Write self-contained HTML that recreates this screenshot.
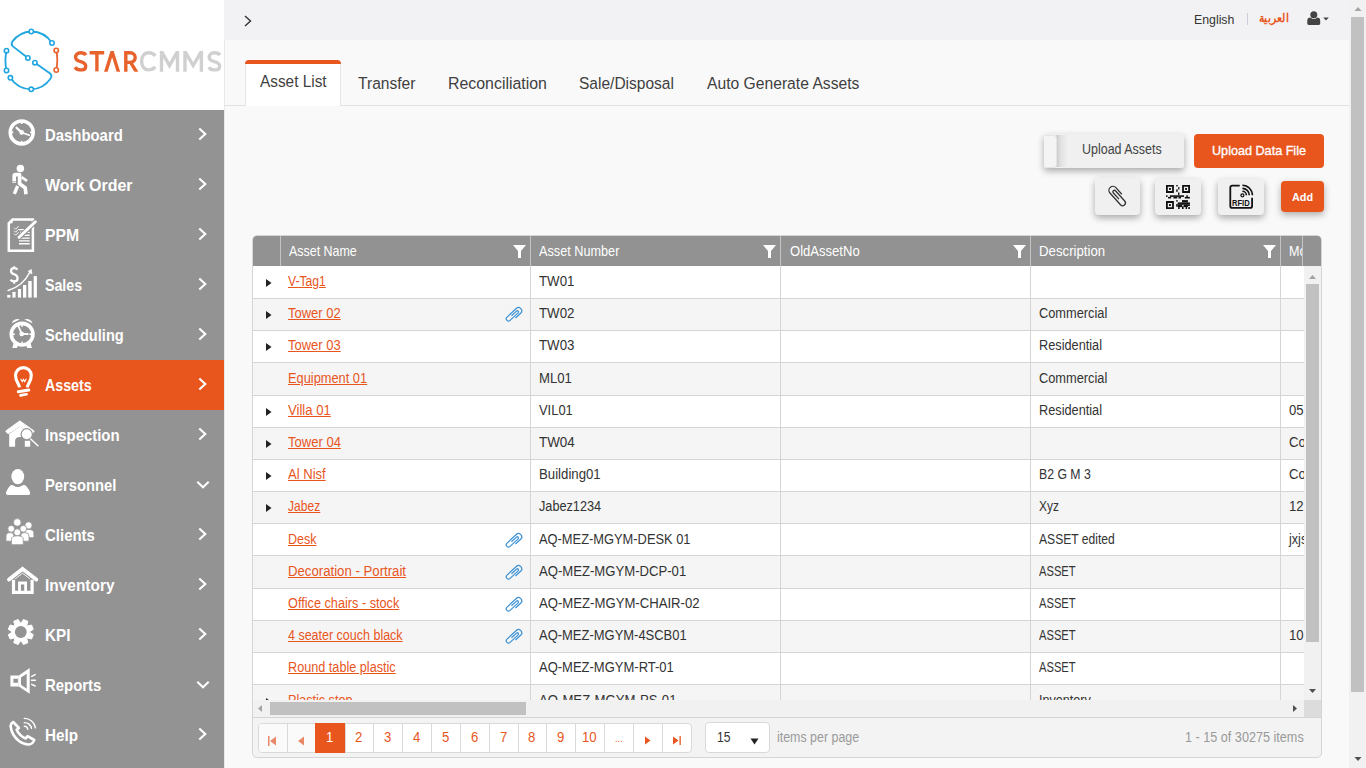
<!DOCTYPE html><html><head><meta charset="utf-8"><style>
*{box-sizing:border-box;margin:0;padding:0}
html,body{width:1366px;height:768px;overflow:hidden;background:#f9f9f9;font-family:"Liberation Sans",sans-serif;color:#333}
div,span,svg{position:absolute}
span{white-space:nowrap;transform-origin:0 0}
</style></head><body><div style="left:0;top:0;width:224px;height:768px;background:#939393"></div>
<div style="left:0;top:0;width:224px;height:110px;background:#fff"><svg style="left:0;top:0" width="224" height="110" viewBox="0 0 224 110">
<g fill="none" stroke="#22a6df" stroke-width="1.8" stroke-linecap="round">
<path d="M52 43 A25 25 0 0 0 31.25 31.5 A25 25 0 0 0 12.3 41.6 Q10.6 44.6 13.2 46.6 L28 58"/>
<path d="M34.9 62.7 L49.8 73.2 Q52.6 75.6 50.6 78.4 A25 25 0 0 1 31.25 89.3 A25 25 0 0 1 10.4 77.8"/>
<path d="M6.5 50.7 Q4.4 60.6 6.5 70.5"/>
</g>
<path d="M56.25 50.4 Q58.4 60.2 56.25 70" fill="none" stroke="#e8622c" stroke-width="1.8"/>
<g fill="#fff" stroke="#22a6df" stroke-width="1.6">
<circle cx="31.25" cy="31.5" r="2.2"/><circle cx="52" cy="43" r="2.2"/><circle cx="6.5" cy="50.7" r="2.2"/><circle cx="6.5" cy="70.5" r="2.2"/>
<circle cx="27.9" cy="58" r="2.2"/><circle cx="34.9" cy="62.7" r="2.2"/><circle cx="10.4" cy="77.8" r="2.2"/><circle cx="31.25" cy="89.3" r="2.2"/>
</g>
<g fill="#fff" stroke="#e8622c" stroke-width="1.6"><circle cx="56.25" cy="50.4" r="2.2"/><circle cx="56.25" cy="70" r="2.2"/></g>
<defs><clipPath id="lc"><rect x="60" y="51" width="170" height="20.8"/></clipPath></defs><g fill="none" stroke-width="3.4" stroke-linejoin="miter" clip-path="url(#lc)">
<g stroke="#e8622c">
<path d="M86 55 C84.8 53.3 82.8 52.7 80.6 52.7 C77.6 52.7 75.6 54.6 75.6 57.2 C75.6 60.1 78.2 61 80.6 61.6 C83.6 62.4 85.7 63.6 85.7 66.2 C85.7 68.6 83.6 70 80.6 70 C78.2 70 76.2 69 75 67.2"/>
<path d="M89.6 52.8 H104.2 M96.9 52.8 V71.6"/>
<path d="M105.6 72.5 L112.1 51.6 L118.6 72.5"/>
<path d="M125.8 72 V52.8 H130 C133.2 52.8 135.2 54.8 135.2 57.6 C135.2 60.4 133.2 62.4 130 62.4 H127.4 M130.6 62.4 L136.8 72.5"/>
</g>
<g stroke="#d0d0d0">
<path d="M155.3 55.8 C153.6 53.8 151.2 52.8 148.6 52.8 C144.2 52.8 141.6 56.4 141.6 61.3 C141.6 66.3 144.2 69.9 148.6 69.9 C151.2 69.9 153.6 68.9 155.3 66.9"/>
<path d="M161.5 72 V51.5 L169.5 65.5 L177.5 51.5 V72"/>
<path d="M185 72 V51.5 L193.2 65.5 L201.4 51.5 V72"/>
<path d="M220 55 C218.8 53.3 216.8 52.7 214.4 52.7 C211.4 52.7 209.2 54.6 209.2 57.2 C209.2 60.1 211.8 61 214.4 61.6 C217.4 62.4 219.6 63.6 219.6 66.2 C219.6 68.6 217.4 70 214.4 70 C212 70 210 69 208.8 67.2"/>
</g></g>
</svg></div>
<svg style="left:0;top:110px" width="45" height="50" viewBox="0 110 45 50"><circle cx="21.7" cy="132.4" r="11.5" fill="none" stroke="#fff" stroke-width="3.5"/><path d="M21.7 121 v3 M21.7 140.8 v3 M10.3 132.4 h3 M30.1 132.4 h3" stroke="#fff" stroke-width="1.6"/><path d="M16.6 127.8 L21.7 132.4" stroke="#fff" stroke-width="2.3" stroke-linecap="round"/><path d="M21.7 132.4 L29.3 135.2" stroke="#fff" stroke-width="1.6" stroke-linecap="round"/><circle cx="21.7" cy="132.4" r="1.7" fill="none" stroke="#fff" stroke-width="1.3"/></svg>
<span style="left:45.20px;top:126px;font-size:17.00px;line-height:19px;color:#fff;font-weight:700;transform:scaleX(0.8762);">Dashboard</span>
<svg style="left:197px;top:127px" width="12" height="14" viewBox="0 0 12 14"><path d="M2.3 1.4 L8.3 7 L2.3 12.6" fill="none" stroke="#fff" stroke-width="2.1"/></svg>
<svg style="left:0;top:160px" width="45" height="50" viewBox="0 160 45 50"><circle cx="20.4" cy="168.6" r="3.75" fill="#fff"/><g fill="none" stroke="#fff" stroke-linejoin="round" stroke-linecap="butt"><path d="M14.2 182.8 V176 Q14.2 174.6 15.6 174.6 H19.6 V183.8 L25.2 187.8 L26 194.3" stroke-width="3.6"/><path d="M17.6 186 L14.3 193.8" stroke-width="3.4"/><path d="M21.6 177.2 L27 180.8" stroke-width="2.6"/></g><path d="M12.3 181.5 h3.8" stroke="#939393" stroke-width="0.6"/></svg>
<span style="left:45.20px;top:176px;font-size:17.00px;line-height:19px;color:#fff;font-weight:700;transform:scaleX(0.9387);">Work Order</span>
<svg style="left:197px;top:177px" width="12" height="14" viewBox="0 0 12 14"><path d="M2.3 1.4 L8.3 7 L2.3 12.6" fill="none" stroke="#fff" stroke-width="2.1"/></svg>
<svg style="left:0;top:210px" width="45" height="50" viewBox="0 210 45 50"><path d="M12.6 219.6 H32.9 V250.8 H8.8 V223.3 Z" fill="none" stroke="#fff" stroke-width="2.5"/><path d="M7.6 223.2 L12.6 218.4 V223.3 Z" fill="#fff"/><path d="M19 229.6 h8 M20 232.4 h9.7 M23 235.3 h6.7 M19 238.1 h10.7 M19 240.9 h10.7 M19 243.8 h10.7" stroke="#fff" stroke-width="1.4"/><path d="M14 227.6 l1.6 1.6 l3 -3 M14 230.6 l1.6 1.6 l3 -3 M14 233.6 l1.6 1.6 l3 -3" fill="none" stroke="#fff" stroke-width="1"/><path d="M19 237.5 L35.6 221.5" stroke="#939393" stroke-width="5"/><path d="M19 237.3 L35.4 221.7" stroke="#fff" stroke-width="2.9" stroke-linecap="round"/></svg>
<span style="left:45.20px;top:226px;font-size:17.00px;line-height:19px;color:#fff;font-weight:700;transform:scaleX(0.9284);">PPM</span>
<svg style="left:197px;top:227px" width="12" height="14" viewBox="0 0 12 14"><path d="M2.3 1.4 L8.3 7 L2.3 12.6" fill="none" stroke="#fff" stroke-width="2.1"/></svg>
<svg style="left:0;top:260px" width="45" height="50" viewBox="0 260 45 50"><g fill="#fff"><rect x="7.2" y="294.9" width="3.2" height="2.7"/><rect x="12.4" y="291.9" width="3.2" height="5.7"/><rect x="17.9" y="289" width="3.2" height="8.6"/><rect x="23" y="285" width="3.3" height="12.6"/><rect x="28.2" y="281" width="3.5" height="16.6"/><rect x="33.7" y="276.1" width="3.2" height="21.5"/></g><path d="M8.2 290.5 Q23 286 30 272" fill="none" stroke="#fff" stroke-width="1.5" stroke-linecap="round"/><path d="M28.3 271.3 L31.3 269.6 L31.9 274 Z" fill="#fff" stroke="#fff" stroke-width="0.8"/><path d="M17.6 269.6 Q16.3 268.2 14.2 268.2 Q11 268.2 11 270.9 Q11 273.2 14.2 274.3 Q17.6 275.4 17.6 278.4 Q17.6 281.3 14.2 281.3 Q11.9 281.3 10.4 279.7" fill="none" stroke="#fff" stroke-width="2.2"/><path d="M14.2 266.2 v2.3 M14.2 281 v2.8" stroke="#fff" stroke-width="2"/></svg>
<span style="left:45.20px;top:276px;font-size:17.00px;line-height:19px;color:#fff;font-weight:700;transform:scaleX(0.8351);">Sales</span>
<svg style="left:197px;top:277px" width="12" height="14" viewBox="0 0 12 14"><path d="M2.3 1.4 L8.3 7 L2.3 12.6" fill="none" stroke="#fff" stroke-width="2.1"/></svg>
<svg style="left:0;top:310px" width="45" height="50" viewBox="0 310 45 50"><circle cx="22.1" cy="334.2" r="10.8" fill="none" stroke="#fff" stroke-width="3.6"/><path d="M11.8 323.3 A5.5 5 -25 0 1 19.9 319.6 Z M32.5 323.3 A5.5 5 25 0 0 24.3 319.6 Z" fill="#fff"/><path d="M13.8 342.5 L12.3 348 H17 L18.2 344.5 Z M30.4 342.5 L31.9 348 H27.2 L26 344.5 Z" fill="#fff"/><path d="M22.1 324.8 v2.2 M22.1 341.4 v2.2 M12.7 334.2 h2.2 M29.3 334.2 h2.2" stroke="#fff" stroke-width="1.4"/><path d="M18.3 325.8 L21.7 333.9" stroke="#fff" stroke-width="1.7" stroke-linecap="round"/><path d="M21.7 333.9 H27.7" stroke="#fff" stroke-width="2" stroke-linecap="round"/><circle cx="21.7" cy="333.9" r="1.7" fill="none" stroke="#fff" stroke-width="1.3"/></svg>
<span style="left:45.20px;top:326px;font-size:17.00px;line-height:19px;color:#fff;font-weight:700;transform:scaleX(0.8596);">Scheduling</span>
<svg style="left:197px;top:327px" width="12" height="14" viewBox="0 0 12 14"><path d="M2.3 1.4 L8.3 7 L2.3 12.6" fill="none" stroke="#fff" stroke-width="2.1"/></svg>
<div style="left:0;top:360px;width:224px;height:50px;background:#e8561e"></div>
<svg style="left:0;top:360px" width="45" height="50" viewBox="0 360 45 50"><path d="M19.5 387.3 C19.3 383.8 15.5 381.5 15.5 375.5 A7.9 7.9 0 0 1 31.3 375.5 C31.3 381.5 27.5 383.8 27.3 387.3" fill="none" stroke="#fff" stroke-width="3.1"/><path d="M18.3 391.7 L28.8 389.9" stroke="#fff" stroke-width="3" stroke-linecap="round"/><path d="M20.5 395.4 L26.6 394.3" stroke="#fff" stroke-width="2.6" stroke-linecap="round"/><path d="M20.7 378.7 l1.6 3 l1.2 -2.2 l1.2 2.2 l1.6 -3" fill="none" stroke="#fff" stroke-width="1.1"/></svg>
<span style="left:45.20px;top:376px;font-size:17.00px;line-height:19px;color:#fff;font-weight:700;transform:scaleX(0.8376);">Assets</span>
<svg style="left:197px;top:377px" width="12" height="14" viewBox="0 0 12 14"><path d="M2.3 1.4 L8.3 7 L2.3 12.6" fill="none" stroke="#fff" stroke-width="2.1"/></svg>
<svg style="left:0;top:410px" width="45" height="50" viewBox="0 410 45 50"><path d="M5.7 431.1 L19.8 420.9 L34.2 431.1 L32 433.8 L19.8 426 L8 433.8 Z" fill="#fff" stroke="#fff" stroke-width="1" stroke-linejoin="round"/><path d="M9.2 434 L19.8 426.5 L23.5 429 L21 437 A5 5 0 0 0 19 437 Q15.1 437.5 15.1 441 V446.7 H9.2 Z" fill="#fff"/><rect x="24.8" y="440.7" width="5.4" height="6" fill="#fff"/><circle cx="26.75" cy="434.3" r="6.2" fill="#939393"/><circle cx="26.75" cy="434.3" r="5" fill="#fff"/><path d="M30.7 439 L37.9 445.7" stroke="#fff" stroke-width="1.5" stroke-linecap="round"/></svg>
<span style="left:45.20px;top:426px;font-size:17.00px;line-height:19px;color:#fff;font-weight:700;transform:scaleX(0.8775);">Inspection</span>
<svg style="left:197px;top:427px" width="12" height="14" viewBox="0 0 12 14"><path d="M2.3 1.4 L8.3 7 L2.3 12.6" fill="none" stroke="#fff" stroke-width="2.1"/></svg>
<svg style="left:0;top:460px" width="45" height="50" viewBox="0 460 45 50"><ellipse cx="17.8" cy="476.6" rx="6.4" ry="7.6" fill="#fff"/><path d="M6 492.6 Q8.5 486.5 11 485 Q12.5 484.6 13.5 485.6 Q17.8 488.6 22.1 485.6 Q23.1 484.6 24.6 485 Q27.7 486.5 30.2 492.6 Q30.6 494.9 28.6 494.9 H7.6 Q5.6 494.9 6 492.6 Z" fill="#fff"/></svg>
<span style="left:45.20px;top:476px;font-size:17.00px;line-height:19px;color:#fff;font-weight:700;transform:scaleX(0.8687);">Personnel</span>
<svg style="left:196px;top:480px" width="14" height="10" viewBox="0 0 14 10"><path d="M1.3 1.8 L7 7.3 L12.7 1.8" fill="none" stroke="#fff" stroke-width="2"/></svg>
<svg style="left:0;top:510px" width="45" height="50" viewBox="0 510 45 50"><g fill="#fff" stroke="#939393" stroke-width="0.8"><circle cx="28.5" cy="525.4" r="3.6"/><path d="M23.8 537.7 V533 Q23.8 529.4 28.5 529.4 Q33.9 529.4 33.9 533 V537.7 Z"/><circle cx="17.3" cy="522.4" r="3.8"/><circle cx="11.2" cy="528.8" r="3.4"/><path d="M6 541.2 V536 Q6 532.6 10.5 532.6 Q14 532.6 14 536 V541.2 Z"/><circle cx="23.3" cy="528.8" r="3.4"/><path d="M20.8 541.2 V536 Q20.8 532.6 25 532.6 Q29 532.6 29 536 V541.2 Z"/><circle cx="17.3" cy="532.3" r="3.5"/><path d="M11.4 544.7 V539.4 Q11.4 535.8 17.3 535.8 Q23.3 535.8 23.3 539.4 V544.7 Z"/></g></svg>
<span style="left:45.20px;top:526px;font-size:17.00px;line-height:19px;color:#fff;font-weight:700;transform:scaleX(0.8804);">Clients</span>
<svg style="left:197px;top:527px" width="12" height="14" viewBox="0 0 12 14"><path d="M2.3 1.4 L8.3 7 L2.3 12.6" fill="none" stroke="#fff" stroke-width="2.1"/></svg>
<svg style="left:0;top:560px" width="45" height="50" viewBox="0 560 45 50"><path d="M9 579.6 L22.55 569 L36.3 579.6" fill="none" stroke="#fff" stroke-width="3.8" stroke-linejoin="miter" stroke-linecap="round"/><path d="M15.2 578.8 L22.55 573.2 L29.9 578.8" fill="none" stroke="#fff" stroke-width="0.9"/><path d="M13.5 579.8 V592.3 H32.1 V579.8" fill="none" stroke="#fff" stroke-width="3.2"/><path d="M19.5 591 V583 H25.6 V591" fill="none" stroke="#fff" stroke-width="2.8"/></svg>
<span style="left:45.20px;top:576px;font-size:17.00px;line-height:19px;color:#fff;font-weight:700;transform:scaleX(0.9083);">Inventory</span>
<svg style="left:197px;top:577px" width="12" height="14" viewBox="0 0 12 14"><path d="M2.3 1.4 L8.3 7 L2.3 12.6" fill="none" stroke="#fff" stroke-width="2.1"/></svg>
<svg style="left:0;top:610px" width="45" height="50" viewBox="0 610 45 50"><path d="M21.25 623.01 L23.43 619.47 L27.80 621.28 L26.84 625.33 L27.47 625.96 L31.52 625.00 L33.33 629.37 L29.79 631.55 L29.79 632.45 L33.33 634.63 L31.52 639.00 L27.47 638.04 L26.84 638.67 L27.80 642.72 L23.43 644.53 L21.25 640.99 L20.35 640.99 L18.17 644.53 L13.80 642.72 L14.76 638.67 L14.13 638.04 L10.08 639.00 L8.27 634.63 L11.81 632.45 L11.81 631.55 L8.27 629.37 L10.08 625.00 L14.13 625.96 L14.76 625.33 L13.80 621.28 L18.17 619.47 L20.35 623.01 Z" fill="#fff" stroke="#fff" stroke-width="1" stroke-linejoin="round"/><circle cx="20.8" cy="632" r="5.9" fill="#939393"/></svg>
<span style="left:45.20px;top:626px;font-size:17.00px;line-height:19px;color:#fff;font-weight:700;transform:scaleX(0.8963);">KPI</span>
<svg style="left:197px;top:627px" width="12" height="14" viewBox="0 0 12 14"><path d="M2.3 1.4 L8.3 7 L2.3 12.6" fill="none" stroke="#fff" stroke-width="2.1"/></svg>
<svg style="left:0;top:660px" width="45" height="50" viewBox="0 660 45 50"><path d="M10.4 675.6 H18.8 V686.5 H10.4 Z M13.4 678.8 V682.8 H17.9 V678.8 Z" fill="#fff" fill-rule="evenodd"/><path d="M18.8 675.6 L29.7 667.9 V693.7 L18.8 686.5 Z M21 677.4 V684.8 L26.7 688.7 V673.8 Z" fill="#fff" fill-rule="evenodd"/><path d="M31.7 676.3 L35.2 674.6 M31.5 680.3 H35.4 M31.7 684.3 L35.2 686" stroke="#fff" stroke-width="1.5" stroke-linecap="round"/></svg>
<span style="left:45.20px;top:676px;font-size:17.00px;line-height:19px;color:#fff;font-weight:700;transform:scaleX(0.8780);">Reports</span>
<svg style="left:196px;top:680px" width="14" height="10" viewBox="0 0 14 10"><path d="M1.3 1.8 L7 7.3 L12.7 1.8" fill="none" stroke="#fff" stroke-width="2"/></svg>
<svg style="left:0;top:710px" width="45" height="50" viewBox="0 710 45 50"><path d="M13.2 722 Q11 723 10.6 726 Q11.5 735 19 741 Q24.5 745 29 744.5 Q33 744 34.2 740 L27.6 736.2 L25.7 738.5 Q19.5 736 16.6 729.8 L18.9 728 Z" fill="none" stroke="#fff" stroke-width="2.6" stroke-linejoin="round"/><path d="M24.3 726.3 A3.4 3.4 0 0 1 27.75 729.3 M24.3 722.6 A7 7 0 0 1 31.5 728.3 M24.3 718.4 A11 11 0 0 1 35.4 727.8" fill="none" stroke="#fff" stroke-width="1.4" stroke-linecap="round"/></svg>
<span style="left:45.20px;top:726px;font-size:17.00px;line-height:19px;color:#fff;font-weight:700;transform:scaleX(0.8985);">Help</span>
<svg style="left:197px;top:727px" width="12" height="14" viewBox="0 0 12 14"><path d="M2.3 1.4 L8.3 7 L2.3 12.6" fill="none" stroke="#fff" stroke-width="2.1"/></svg>
<div style="left:224px;top:0;width:1125px;height:40px;background:#f2f2f4"></div>
<div style="left:224px;top:40px;width:1px;height:728px;background:#e8e8e8"></div>
<svg style="left:243px;top:15px" width="10" height="12" viewBox="0 0 10 12"><path d="M2 1 L7.5 6 L2 11" fill="none" stroke="#333" stroke-width="1.4"/></svg>
<span style="left:1194.40px;top:12px;font-size:13.70px;line-height:15px;color:#333;font-weight:400;transform:scaleX(0.8991);">English</span>
<div style="left:1247px;top:13px;width:1px;height:12px;background:#ccd"></div>
<span style="left:1258.5px;top:10px;font-size:11.5px;font-weight:bold;color:#e8561e;line-height:16px;transform:scaleX(0.9)">العربية</span>
<svg style="left:1306px;top:10px" width="24" height="16" viewBox="0 0 24 16"><path d="M1.3 10.8 Q1.3 7.6 4.5 7.6 H11 Q14.2 7.6 14.2 10.8 V13.6 Q14.2 15 12.8 15 H2.7 Q1.3 15 1.3 13.6 Z" fill="#444"/><circle cx="7.8" cy="4.8" r="4.3" fill="#f2f2f4"/><circle cx="7.8" cy="4.8" r="3.5" fill="#444"/><path d="M17.2 7.6 h5.6 l-2.8 2.8z" fill="#444"/></svg>
<div style="left:1349px;top:0;width:17px;height:768px;background:#f1f1f1"></div>
<div style="left:1351px;top:17px;width:13px;height:675px;background:#c1c1c1"></div>
<svg style="left:1350px;top:0" width="16" height="768" viewBox="0 0 16 768"><path d="M4.5 11 L8 7 L11.5 11 Z" fill="#a3a3a3"/><path d="M4.5 757 L11.5 757 L8 761 Z" fill="#505050"/></svg>
<div style="left:225px;top:105px;width:1124px;height:1px;background:#dfe3e8"></div>
<div style="left:245px;top:60px;width:96px;height:46px;background:#fff;border-left:1px solid #e3e6ea;border-right:1px solid #e3e6ea;border-radius:4px 4px 0 0"></div>
<div style="left:245px;top:60px;width:96px;height:4px;background:#e8561e;border-radius:4px 4px 0 0"></div>
<span style="left:260.30px;top:72px;font-size:16.80px;line-height:19px;color:#3f3f3f;font-weight:400;transform:scaleX(0.9159);">Asset List</span>
<span style="left:357.70px;top:73px;font-size:17.20px;line-height:20px;color:#3f3f3f;font-weight:400;transform:scaleX(0.9069);">Transfer</span>
<span style="left:448.20px;top:73px;font-size:17.20px;line-height:20px;color:#3f3f3f;font-weight:400;transform:scaleX(0.9245);">Reconciliation</span>
<span style="left:579.30px;top:73px;font-size:17.20px;line-height:20px;color:#3f3f3f;font-weight:400;transform:scaleX(0.9033);">Sale/Disposal</span>
<span style="left:706.50px;top:73px;font-size:17.20px;line-height:20px;color:#3f3f3f;font-weight:400;transform:scaleX(0.9114);">Auto Generate Assets</span>
<div style="left:1044px;top:134px;width:140px;height:34px;background:#f0f0f0;border-radius:2px;box-shadow:0 3px 7px rgba(0,0,0,.32)"></div>
<div style="left:1056px;top:135px;width:12px;height:32px;background:linear-gradient(90deg,rgba(0,0,0,.17),rgba(0,0,0,.06) 40%,rgba(0,0,0,0))"></div>
<div style="left:1044px;top:134.5px;width:12.5px;height:33px;background:#f4f4f4;border:1px solid #e4e4e4;border-left:none;border-radius:2px 4px 4px 2px"></div>
<span style="left:1081.60px;top:141px;font-size:14.00px;line-height:16px;color:#444;font-weight:400;transform:scaleX(0.8905);">Upload Assets</span>
<div style="left:1194px;top:134px;width:130px;height:34px;background:#e8561e;border-radius:4px"></div>
<span style="left:1212.00px;top:143px;font-size:13.50px;line-height:15px;color:#fff;font-weight:400;transform:scaleX(0.9348);-webkit-text-stroke:0.35px #fff">Upload Data File</span>
<div style="left:1095px;top:178px;width:45px;height:37px;background:#f0f0f0;border-radius:4px;box-shadow:0 3px 7px rgba(0,0,0,.32)"></div>
<div style="left:1155px;top:179px;width:46px;height:36px;background:#f0f0f0;border-radius:4px;box-shadow:0 3px 7px rgba(0,0,0,.32)"></div>
<div style="left:1218px;top:179px;width:46px;height:36px;background:#f0f0f0;border-radius:4px;box-shadow:0 3px 7px rgba(0,0,0,.32)"></div>
<div style="left:1281px;top:181px;width:43px;height:31px;background:#e8561e;border-radius:4px;box-shadow:0 3px 7px rgba(0,0,0,.3)"></div>
<span style="left:1292.00px;top:191px;font-size:11.00px;line-height:12px;color:#fff;font-weight:700;transform:scaleX(0.9821);">Add</span>
<svg style="left:1104.6px;top:182.8px" width="26" height="26" viewBox="-13 -13 26 26"><g transform="rotate(-42)" fill="none" stroke="#333" stroke-width="1.3"><path d="M4 1.2 V-7.6 A4 4 0 0 0 -4 -7.6 V8.2 A2.8 2.8 0 0 0 1.6 8.2 V-5.6 A1.5 1.5 0 0 0 -1.4 -5.6 V3"/></g></svg>
<svg style="left:1166px;top:185px" width="24" height="24" viewBox="0 0 24 24"><g fill="#111"><path d="M0.0 0.0h7.9v7.9h-7.9z M1.8 1.8v4.3h4.3v-4.3z" fill-rule="evenodd"/><rect x="3.0" y="3.0" width="1.9" height="1.9"/><path d="M16.1 0.0h7.9v7.9h-7.9z M17.9 1.8v4.3h4.3v-4.3z" fill-rule="evenodd"/><rect x="19.1" y="3.0" width="1.9" height="1.9"/><path d="M0.0 16.1h7.9v7.9h-7.9z M1.8 17.9v4.3h4.3v-4.3z" fill-rule="evenodd"/><rect x="3.0" y="19.1" width="1.9" height="1.9"/><rect x="10.2" y="0.0" width="1.5" height="1.4"/><rect x="12.2" y="2.0" width="1.2" height="2.5"/><rect x="10.2" y="4.4" width="1.5" height="2.4"/><rect x="12.1" y="7.4" width="1.3" height="3.0"/><rect x="0.0" y="10.3" width="1.6" height="1.6"/><rect x="3.9" y="10.3" width="14.1" height="1.6"/><rect x="2.0" y="11.9" width="3.2" height="1.6"/><rect x="7.4" y="11.9" width="3.9" height="1.6"/><rect x="12.5" y="11.9" width="2.5" height="1.6"/><rect x="18.8" y="11.9" width="5.1" height="1.6"/><rect x="20.3" y="10.3" width="1.6" height="1.6"/><rect x="10.2" y="15.1" width="1.5" height="1.5"/><rect x="16.0" y="15.1" width="5.9" height="2.3"/><rect x="11.7" y="17.4" width="12.2" height="2.4"/><rect x="10.2" y="19.0" width="1.5" height="2.7"/><rect x="11.7" y="19.8" width="4.5" height="2.3"/><rect x="17.6" y="19.8" width="4.3" height="2.3"/><rect x="21.9" y="19.8" width="2.0" height="1.2"/><rect x="12.1" y="22.1" width="1.6" height="1.9"/><rect x="16.0" y="21.4" width="1.6" height="2.6"/><rect x="19.6" y="22.1" width="1.5" height="1.9"/><rect x="22.3" y="22.1" width="1.6" height="1.9"/></g></svg>
<svg style="left:1222px;top:180px" width="38" height="34" viewBox="1222 180 38 34"><path d="M1239.7 185.6 H1232.3 Q1230.3 185.6 1230.3 187.6 V205.9 Q1230.3 207.9 1232.3 207.9 H1250.1 Q1252.1 207.9 1252.1 205.9 V197.7" fill="none" stroke="#111" stroke-width="1.8"/><path d="M1242.4 185.3 A10 10 0 0 1 1252.4 195.3 M1242.4 188.4 A6.9 6.9 0 0 1 1249.3 195.3 M1242.4 191.3 A4 4 0 0 1 1246.4 195.3" fill="none" stroke="#111" stroke-width="1.6"/><circle cx="1242.4" cy="195.3" r="1.5" fill="none" stroke="#111" stroke-width="1.3"/></svg>
<span style="left:1232.20px;top:198px;font-size:9.00px;line-height:10px;color:#111;font-weight:700;transform:scaleX(0.8429);">RFID</span>
<div style="left:252px;top:235px;width:1070px;height:523px;border:1px solid #d5d5d5;border-radius:5px;background:#f3f3f3;overflow:hidden"><div style="left:0;top:0;width:1068px;height:30px;background:#929292"></div></div>
<div style="left:280px;top:236px;width:1px;height:30px;background:#c4c4c4"></div>
<div style="left:530px;top:236px;width:1px;height:30px;background:#c4c4c4"></div>
<div style="left:780px;top:236px;width:1px;height:30px;background:#c4c4c4"></div>
<div style="left:1030px;top:236px;width:1px;height:30px;background:#c4c4c4"></div>
<div style="left:1280px;top:236px;width:1px;height:30px;background:#c4c4c4"></div>
<div style="left:1302px;top:236px;width:1px;height:30px;background:#c4c4c4"></div>
<span style="left:289.20px;top:243px;font-size:14.10px;line-height:16px;color:#fff;font-weight:400;transform:scaleX(0.8829);">Asset Name</span>
<span style="left:539.20px;top:243px;font-size:14.10px;line-height:16px;color:#fff;font-weight:400;transform:scaleX(0.9000);">Asset Number</span>
<span style="left:789.50px;top:243px;font-size:14.10px;line-height:16px;color:#fff;font-weight:400;transform:scaleX(0.9265);">OldAssetNo</span>
<span style="left:1039.30px;top:243px;font-size:14.10px;line-height:16px;color:#fff;font-weight:400;transform:scaleX(0.9386);">Description</span>
<div style="left:1281px;top:236px;width:21px;height:30px;overflow:hidden"><span style="left:8.00px;top:7px;font-size:14.10px;line-height:16px;color:#fff;font-weight:400;transform:scaleX(0.8900);">Mo</span></div>
<svg style="left:513px;top:245px" width="14" height="14" viewBox="0 0 14 14"><path d="M0 0 H13 L8 6 V13 H5 V6 Z" fill="#fff"/></svg>
<svg style="left:763px;top:245px" width="14" height="14" viewBox="0 0 14 14"><path d="M0 0 H13 L8 6 V13 H5 V6 Z" fill="#fff"/></svg>
<svg style="left:1013px;top:245px" width="14" height="14" viewBox="0 0 14 14"><path d="M0 0 H13 L8 6 V13 H5 V6 Z" fill="#fff"/></svg>
<svg style="left:1263px;top:245px" width="14" height="14" viewBox="0 0 14 14"><path d="M0 0 H13 L8 6 V13 H5 V6 Z" fill="#fff"/></svg>
<div style="left:253px;top:266px;width:1051px;height:434px;overflow:hidden;background:#fff"><div style="left:0;top:0px;width:1051px;height:33px;background:#fff;border-bottom:1px solid #d5d5d5"></div><svg style="left:12px;top:11.50px" width="8" height="10" viewBox="0 0 8 10"><path d="M1 1 L6.5 5 L1 9 Z" fill="#222"/></svg><span style="left:35.00px;top:7px;font-size:14.00px;line-height:16px;color:#e8561e;font-weight:400;transform:scaleX(0.8650);text-decoration:underline">V-Tag1</span><span style="left:286.00px;top:7px;font-size:14.00px;line-height:16px;color:#333;font-weight:400;transform:scaleX(0.9481);">TW01</span><div style="left:0;top:33px;width:1051px;height:32px;background:#f5f5f5;border-bottom:1px solid #d5d5d5"></div><svg style="left:12px;top:43.50px" width="8" height="10" viewBox="0 0 8 10"><path d="M1 1 L6.5 5 L1 9 Z" fill="#222"/></svg><span style="left:35.00px;top:39px;font-size:14.00px;line-height:16px;color:#e8561e;font-weight:400;transform:scaleX(0.9277);text-decoration:underline">Tower 02</span><svg style="left:251px;top:38.80px" width="20" height="20" viewBox="-10 -10 20 20"><g transform="rotate(47) scale(0.8)" fill="none" stroke="#3d93d6" stroke-width="1.55"><path d="M4 1.2 V-7.6 A4 4 0 0 0 -4 -7.6 V8.2 A2.8 2.8 0 0 0 1.6 8.2 V-5.6 A1.5 1.5 0 0 0 -1.4 -5.6 V3"/></g></svg><span style="left:286.00px;top:39px;font-size:14.00px;line-height:16px;color:#333;font-weight:400;transform:scaleX(0.9481);">TW02</span><span style="left:786.40px;top:39px;font-size:14.00px;line-height:16px;color:#333;font-weight:400;transform:scaleX(0.9146);">Commercial</span><div style="left:0;top:65px;width:1051px;height:32px;background:#fff;border-bottom:1px solid #d5d5d5"></div><svg style="left:12px;top:75.50px" width="8" height="10" viewBox="0 0 8 10"><path d="M1 1 L6.5 5 L1 9 Z" fill="#222"/></svg><span style="left:35.00px;top:71px;font-size:14.00px;line-height:16px;color:#e8561e;font-weight:400;transform:scaleX(0.9277);text-decoration:underline">Tower 03</span><span style="left:286.00px;top:71px;font-size:14.00px;line-height:16px;color:#333;font-weight:400;transform:scaleX(0.9481);">TW03</span><span style="left:786.40px;top:71px;font-size:14.00px;line-height:16px;color:#333;font-weight:400;transform:scaleX(0.9096);">Residential</span><div style="left:0;top:97px;width:1051px;height:33px;background:#f5f5f5;border-bottom:1px solid #d5d5d5"></div><span style="left:35.00px;top:104px;font-size:14.00px;line-height:16px;color:#e8561e;font-weight:400;transform:scaleX(0.9156);text-decoration:underline">Equipment 01</span><span style="left:286.00px;top:104px;font-size:14.00px;line-height:16px;color:#333;font-weight:400;transform:scaleX(0.9394);">ML01</span><span style="left:786.40px;top:104px;font-size:14.00px;line-height:16px;color:#333;font-weight:400;transform:scaleX(0.9146);">Commercial</span><div style="left:0;top:130px;width:1051px;height:32px;background:#fff;border-bottom:1px solid #d5d5d5"></div><svg style="left:12px;top:140.50px" width="8" height="10" viewBox="0 0 8 10"><path d="M1 1 L6.5 5 L1 9 Z" fill="#222"/></svg><span style="left:35.00px;top:136px;font-size:14.00px;line-height:16px;color:#e8561e;font-weight:400;transform:scaleX(0.9373);text-decoration:underline">Villa 01</span><span style="left:286.00px;top:136px;font-size:14.00px;line-height:16px;color:#333;font-weight:400;transform:scaleX(0.9225);">VIL01</span><span style="left:786.40px;top:136px;font-size:14.00px;line-height:16px;color:#333;font-weight:400;transform:scaleX(0.9096);">Residential</span><div style="left:1028px;top:129px;width:23px;height:30px;overflow:hidden"><span style="left:8.00px;top:7px;font-size:14.00px;line-height:16px;color:#333;font-weight:400;transform:scaleX(0.9400);">05</span></div><div style="left:0;top:162px;width:1051px;height:32px;background:#f5f5f5;border-bottom:1px solid #d5d5d5"></div><svg style="left:12px;top:172.50px" width="8" height="10" viewBox="0 0 8 10"><path d="M1 1 L6.5 5 L1 9 Z" fill="#222"/></svg><span style="left:35.00px;top:168px;font-size:14.00px;line-height:16px;color:#e8561e;font-weight:400;transform:scaleX(0.9312);text-decoration:underline">Tower 04</span><span style="left:286.00px;top:168px;font-size:14.00px;line-height:16px;color:#333;font-weight:400;transform:scaleX(0.9588);">TW04</span><div style="left:1028px;top:161px;width:23px;height:30px;overflow:hidden"><span style="left:8.00px;top:7px;font-size:14.00px;line-height:16px;color:#333;font-weight:400;transform:scaleX(0.9400);">Co</span></div><div style="left:0;top:194px;width:1051px;height:32px;background:#fff;border-bottom:1px solid #d5d5d5"></div><svg style="left:12px;top:204.50px" width="8" height="10" viewBox="0 0 8 10"><path d="M1 1 L6.5 5 L1 9 Z" fill="#222"/></svg><span style="left:35.00px;top:200px;font-size:14.00px;line-height:16px;color:#e8561e;font-weight:400;transform:scaleX(0.9320);text-decoration:underline">Al Nisf</span><span style="left:286.00px;top:200px;font-size:14.00px;line-height:16px;color:#333;font-weight:400;transform:scaleX(0.9436);">Building01</span><span style="left:786.40px;top:200px;font-size:14.00px;line-height:16px;color:#333;font-weight:400;transform:scaleX(0.8760);">B2 G M 3</span><div style="left:1028px;top:193px;width:23px;height:30px;overflow:hidden"><span style="left:8.00px;top:7px;font-size:14.00px;line-height:16px;color:#333;font-weight:400;transform:scaleX(0.9400);">Co</span></div><div style="left:0;top:226px;width:1051px;height:32px;background:#f5f5f5;border-bottom:1px solid #d5d5d5"></div><svg style="left:12px;top:236.50px" width="8" height="10" viewBox="0 0 8 10"><path d="M1 1 L6.5 5 L1 9 Z" fill="#222"/></svg><span style="left:35.00px;top:232px;font-size:14.00px;line-height:16px;color:#e8561e;font-weight:400;transform:scaleX(0.8646);text-decoration:underline">Jabez</span><span style="left:286.00px;top:232px;font-size:14.00px;line-height:16px;color:#333;font-weight:400;transform:scaleX(0.9065);">Jabez1234</span><span style="left:786.40px;top:232px;font-size:14.00px;line-height:16px;color:#333;font-weight:400;transform:scaleX(0.8527);">Xyz</span><div style="left:1028px;top:225px;width:23px;height:30px;overflow:hidden"><span style="left:8.00px;top:7px;font-size:14.00px;line-height:16px;color:#333;font-weight:400;transform:scaleX(0.9400);">12</span></div><div style="left:0;top:258px;width:1051px;height:32px;background:#fff;border-bottom:1px solid #d5d5d5"></div><span style="left:35.00px;top:265px;font-size:14.00px;line-height:16px;color:#e8561e;font-weight:400;transform:scaleX(0.8935);text-decoration:underline">Desk</span><svg style="left:251px;top:264.80px" width="20" height="20" viewBox="-10 -10 20 20"><g transform="rotate(47) scale(0.8)" fill="none" stroke="#3d93d6" stroke-width="1.55"><path d="M4 1.2 V-7.6 A4 4 0 0 0 -4 -7.6 V8.2 A2.8 2.8 0 0 0 1.6 8.2 V-5.6 A1.5 1.5 0 0 0 -1.4 -5.6 V3"/></g></svg><span style="left:286.00px;top:265px;font-size:14.00px;line-height:16px;color:#333;font-weight:400;transform:scaleX(0.9187);">AQ-MEZ-MGYM-DESK 01</span><span style="left:786.40px;top:265px;font-size:14.00px;line-height:16px;color:#333;font-weight:400;transform:scaleX(0.8644);">ASSET edited</span><div style="left:1028px;top:258px;width:23px;height:30px;overflow:hidden"><span style="left:8.00px;top:7px;font-size:14.00px;line-height:16px;color:#333;font-weight:400;transform:scaleX(0.9000);">jxjs</span></div><div style="left:0;top:290px;width:1051px;height:33px;background:#f5f5f5;border-bottom:1px solid #d5d5d5"></div><span style="left:35.00px;top:297px;font-size:14.00px;line-height:16px;color:#e8561e;font-weight:400;transform:scaleX(0.9420);text-decoration:underline">Decoration - Portrait</span><svg style="left:251px;top:296.80px" width="20" height="20" viewBox="-10 -10 20 20"><g transform="rotate(47) scale(0.8)" fill="none" stroke="#3d93d6" stroke-width="1.55"><path d="M4 1.2 V-7.6 A4 4 0 0 0 -4 -7.6 V8.2 A2.8 2.8 0 0 0 1.6 8.2 V-5.6 A1.5 1.5 0 0 0 -1.4 -5.6 V3"/></g></svg><span style="left:286.00px;top:297px;font-size:14.00px;line-height:16px;color:#333;font-weight:400;transform:scaleX(0.9369);">AQ-MEZ-MGYM-DCP-01</span><span style="left:786.40px;top:297px;font-size:14.00px;line-height:16px;color:#333;font-weight:400;transform:scaleX(0.7973);">ASSET</span><div style="left:0;top:323px;width:1051px;height:32px;background:#fff;border-bottom:1px solid #d5d5d5"></div><span style="left:35.00px;top:329px;font-size:14.00px;line-height:16px;color:#e8561e;font-weight:400;transform:scaleX(0.9074);text-decoration:underline">Office chairs - stock</span><svg style="left:251px;top:328.80px" width="20" height="20" viewBox="-10 -10 20 20"><g transform="rotate(47) scale(0.8)" fill="none" stroke="#3d93d6" stroke-width="1.55"><path d="M4 1.2 V-7.6 A4 4 0 0 0 -4 -7.6 V8.2 A2.8 2.8 0 0 0 1.6 8.2 V-5.6 A1.5 1.5 0 0 0 -1.4 -5.6 V3"/></g></svg><span style="left:286.00px;top:329px;font-size:14.00px;line-height:16px;color:#333;font-weight:400;transform:scaleX(0.9386);">AQ-MEZ-MGYM-CHAIR-02</span><span style="left:786.40px;top:329px;font-size:14.00px;line-height:16px;color:#333;font-weight:400;transform:scaleX(0.7973);">ASSET</span><div style="left:0;top:355px;width:1051px;height:32px;background:#f5f5f5;border-bottom:1px solid #d5d5d5"></div><span style="left:35.00px;top:361px;font-size:14.00px;line-height:16px;color:#e8561e;font-weight:400;transform:scaleX(0.8925);text-decoration:underline">4 seater couch black</span><svg style="left:251px;top:360.80px" width="20" height="20" viewBox="-10 -10 20 20"><g transform="rotate(47) scale(0.8)" fill="none" stroke="#3d93d6" stroke-width="1.55"><path d="M4 1.2 V-7.6 A4 4 0 0 0 -4 -7.6 V8.2 A2.8 2.8 0 0 0 1.6 8.2 V-5.6 A1.5 1.5 0 0 0 -1.4 -5.6 V3"/></g></svg><span style="left:286.00px;top:361px;font-size:14.00px;line-height:16px;color:#333;font-weight:400;transform:scaleX(0.9262);">AQ-MEZ-MGYM-4SCB01</span><span style="left:786.40px;top:361px;font-size:14.00px;line-height:16px;color:#333;font-weight:400;transform:scaleX(0.7973);">ASSET</span><div style="left:1028px;top:354px;width:23px;height:30px;overflow:hidden"><span style="left:8.00px;top:7px;font-size:14.00px;line-height:16px;color:#333;font-weight:400;transform:scaleX(0.9400);">10</span></div><div style="left:0;top:387px;width:1051px;height:32px;background:#fff;border-bottom:1px solid #d5d5d5"></div><span style="left:35.00px;top:393px;font-size:14.00px;line-height:16px;color:#e8561e;font-weight:400;transform:scaleX(0.9045);text-decoration:underline">Round table plastic</span><span style="left:286.00px;top:393px;font-size:14.00px;line-height:16px;color:#333;font-weight:400;transform:scaleX(0.9284);">AQ-MEZ-MGYM-RT-01</span><span style="left:786.40px;top:393px;font-size:14.00px;line-height:16px;color:#333;font-weight:400;transform:scaleX(0.7973);">ASSET</span><div style="left:0;top:419px;width:1051px;height:32px;background:#f5f5f5;border-bottom:1px solid #d5d5d5"></div><svg style="left:12px;top:430.50px" width="8" height="10" viewBox="0 0 8 10"><path d="M1 1 L6.5 5 L1 9 Z" fill="#222"/></svg><span style="left:35.00px;top:426px;font-size:14.00px;line-height:16px;color:#e8561e;font-weight:400;transform:scaleX(0.9000);text-decoration:underline">Plastic stop</span><span style="left:286.00px;top:426px;font-size:14.00px;line-height:16px;color:#333;font-weight:400;transform:scaleX(0.9400);">AQ-MEZ-MGYM-PS-01</span><span style="left:786.40px;top:426px;font-size:14.00px;line-height:16px;color:#333;font-weight:400;transform:scaleX(0.9000);">Inventory</span><div style="left:277px;top:0;width:1px;height:434px;background:#d5d5d5"></div><div style="left:527px;top:0;width:1px;height:434px;background:#d5d5d5"></div><div style="left:777px;top:0;width:1px;height:434px;background:#d5d5d5"></div><div style="left:1027px;top:0;width:1px;height:434px;background:#d5d5d5"></div></div>
<div style="left:1304px;top:266px;width:17px;height:434px;background:#f1f1f1"></div>
<div style="left:1306px;top:284px;width:13px;height:358px;background:#c1c1c1"></div>
<svg style="left:1304px;top:266px" width="17" height="434" viewBox="0 0 17 434"><path d="M5 13 L8.5 9 L12 13 Z" fill="#a3a3a3"/><path d="M5 423 L12 423 L8.5 427 Z" fill="#505050"/></svg>
<div style="left:253px;top:700px;width:1051px;height:17px;background:#f1f1f1"></div>
<div style="left:270px;top:702px;width:256px;height:13px;background:#c1c1c1"></div>
<div style="left:1304px;top:700px;width:17px;height:17px;background:#dcdcdc"></div>
<svg style="left:253px;top:700px" width="1051" height="17" viewBox="0 0 1051 17"><path d="M9 5 L5 8.5 L9 12 Z" fill="#a3a3a3"/><path d="M1040 5 L1044 8.5 L1040 12 Z" fill="#505050"/></svg>
<div style="left:253px;top:717px;width:1068px;height:1px;background:#d5d5d5"></div>
<div style="left:258px;top:723px;width:434px;height:30px;border:1px solid #d9d9d9;border-radius:4px;background:#fff"></div>
<div style="left:287px;top:723px;width:1px;height:30px;background:#d9d9d9"></div>
<div style="left:259px;top:724px;width:28px;height:28px;background:#fafafa;border-radius:3px 0 0 3px"></div>
<svg style="left:267px;top:735.5px" width="10" height="10" viewBox="0 0 10 10"><path d="M1 0 h1.5 v10 h-1.5z M9 0.5 L3 5 L9 9.5z" fill="#e8896a"/></svg>
<div style="left:315px;top:723px;width:1px;height:30px;background:#d9d9d9"></div>
<div style="left:288px;top:724px;width:27px;height:28px;background:#fafafa"></div>
<svg style="left:297px;top:735.5px" width="8" height="10" viewBox="0 0 8 10"><path d="M7 0.5 L1 5 L7 9.5z" fill="#e8896a"/></svg>
<div style="left:345px;top:723px;width:1px;height:30px;background:#d9d9d9"></div>
<div style="left:315px;top:723px;width:30px;height:30px;background:#e8561e"></div>
<span style="left:325.50px;top:729px;font-size:14.00px;line-height:16px;color:#fff;font-weight:400;transform:scaleX(0.9400);">1</span>
<div style="left:373px;top:723px;width:1px;height:30px;background:#d9d9d9"></div>
<span style="left:355.33px;top:729px;font-size:14.00px;line-height:16px;color:#e8561e;font-weight:400;transform:scaleX(0.9400);">2</span>
<div style="left:402px;top:723px;width:1px;height:30px;background:#d9d9d9"></div>
<span style="left:383.83px;top:729px;font-size:14.00px;line-height:16px;color:#e8561e;font-weight:400;transform:scaleX(0.9400);">3</span>
<div style="left:431px;top:723px;width:1px;height:30px;background:#d9d9d9"></div>
<span style="left:412.83px;top:729px;font-size:14.00px;line-height:16px;color:#e8561e;font-weight:400;transform:scaleX(0.9400);">4</span>
<div style="left:460px;top:723px;width:1px;height:30px;background:#d9d9d9"></div>
<span style="left:441.83px;top:729px;font-size:14.00px;line-height:16px;color:#e8561e;font-weight:400;transform:scaleX(0.9400);">5</span>
<div style="left:489px;top:723px;width:1px;height:30px;background:#d9d9d9"></div>
<span style="left:470.83px;top:729px;font-size:14.00px;line-height:16px;color:#e8561e;font-weight:400;transform:scaleX(0.9400);">6</span>
<div style="left:518px;top:723px;width:1px;height:30px;background:#d9d9d9"></div>
<span style="left:499.83px;top:729px;font-size:14.00px;line-height:16px;color:#e8561e;font-weight:400;transform:scaleX(0.9400);">7</span>
<div style="left:546px;top:723px;width:1px;height:30px;background:#d9d9d9"></div>
<span style="left:528.33px;top:729px;font-size:14.00px;line-height:16px;color:#e8561e;font-weight:400;transform:scaleX(0.9400);">8</span>
<div style="left:575px;top:723px;width:1px;height:30px;background:#d9d9d9"></div>
<span style="left:556.83px;top:729px;font-size:14.00px;line-height:16px;color:#e8561e;font-weight:400;transform:scaleX(0.9400);">9</span>
<div style="left:604px;top:723px;width:1px;height:30px;background:#d9d9d9"></div>
<span style="left:582.17px;top:729px;font-size:14.00px;line-height:16px;color:#e8561e;font-weight:400;transform:scaleX(0.9400);">10</span>
<div style="left:633px;top:723px;width:1px;height:30px;background:#d9d9d9"></div>
<span style="left:614.50px;top:732px;font-size:11.00px;line-height:12px;color:#e8561e;font-weight:400;transform:scaleX(0.8500);">...</span>
<div style="left:662px;top:723px;width:1px;height:30px;background:#d9d9d9"></div>
<svg style="left:644px;top:735.5px" width="8" height="9" viewBox="0 0 8 9"><path d="M1 0.5 L6.5 4.5 L1 8.5z" fill="#e8561e"/></svg>
<svg style="left:672px;top:735.5px" width="10" height="9" viewBox="0 0 10 9"><path d="M1 0.5 L6.5 4.5 L1 8.5z M7.5 0 h1.3 v9 h-1.3z" fill="#e8561e"/></svg>
<div style="left:705px;top:722px;width:65px;height:31px;border:1px solid #d9d9d9;border-radius:4px;background:#fff"></div>
<span style="left:717.40px;top:729px;font-size:14.00px;line-height:16px;color:#333;font-weight:400;transform:scaleX(0.8669);">15</span>
<svg style="left:750px;top:738px" width="9" height="7" viewBox="0 0 9 7"><path d="M0.5 0.5 h8 l-4 6z" fill="#222"/></svg>
<span style="left:776.90px;top:729px;font-size:14.00px;line-height:16px;color:#9a9a9a;font-weight:400;transform:scaleX(0.8865);">items per page</span>
<span style="left:1184.90px;top:729px;font-size:14.00px;line-height:16px;color:#9a9a9a;font-weight:400;transform:scaleX(0.9025);">1 - 15 of 30275 items</span></body></html>
